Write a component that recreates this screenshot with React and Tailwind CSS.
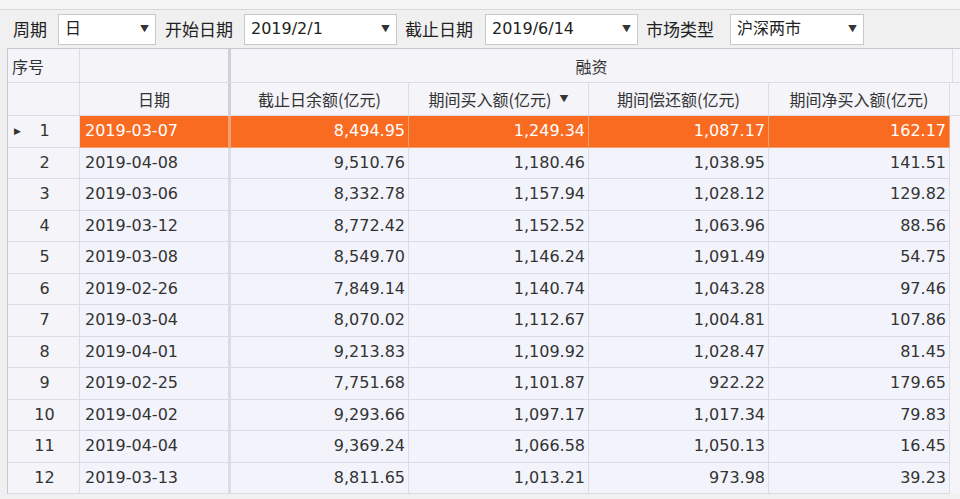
const rows = [
["2019-03-07","8,494.95","1,249.34","1,087.17","162.17"],
["2019-04-08","9,510.76","1,180.46","1,038.95","141.51"],
["2019-03-06","8,332.78","1,157.94","1,028.12","129.82"],
["2019-03-12","8,772.42","1,152.52","1,063.96","88.56"],
["2019-03-08","8,549.70","1,146.24","1,091.49","54.75"],
["2019-02-26","7,849.14","1,140.74","1,043.28","97.46"],
["2019-03-04","8,070.02","1,112.67","1,004.81","107.86"],
["2019-04-01","9,213.83","1,109.92","1,028.47","81.45"],
["2019-02-25","7,751.68","1,101.87","922.22","179.65"],
["2019-04-02","9,293.66","1,097.17","1,017.34","79.83"],
["2019-04-04","9,369.24","1,066.58","1,050.13","16.45"],
["2019-03-13","8,811.65","1,013.21","973.98","39.23"],
];
const F = { fontFamily: '"Noto Sans CJK SC", "Noto Sans", sans-serif' };
const N = { fontFamily: 'Tahoma, "DejaVu Sans", "Noto Sans CJK SC", sans-serif' };
const Caret = () => <span className="text-[9px] text-[#333]">▼</span>;
const Combo = ({ w, v }) => (
  <div className={`h-[31px] ${w} bg-white border border-[#c8c8c8] flex items-center justify-between px-1.5 text-[16px] text-[#222]`}>
    <span style={N}>{v}</span><Caret />
  </div>
);
export default function App() {
  return (
    <div className="w-[960px] h-[499px] overflow-hidden bg-[#f0f0f0] relative" style={F}>
      <div className="h-[10px] border-b border-[#d8d8d8] bg-[#f5f5f5]" />
      <div className="h-[38px] flex items-center pl-[13px] text-[17px] text-[#222]">
        <span className="w-[45px]">周期</span><Combo w="w-[98px]" v="日" />
        <span className="ml-[9px] w-[79px]">开始日期</span><Combo w="w-[153px]" v="2019/2/1" />
        <span className="ml-[8px] w-[80px]">截止日期</span><Combo w="w-[153px]" v="2019/6/14" />
        <span className="ml-[8px] w-[84px]">市场类型</span><Combo w="w-[134px]" v="沪深两市" />
      </div>
      <div className="ml-[7px] border-l border-t border-[#c8c8d0] bg-[#f4f4f9] text-[16px] text-[#333]">
        <div className="flex h-[34px] border-b border-[#dcdce4]">
          <div className="w-[72px] border-r border-[#dcdce4] pl-[4px] flex items-center">序号</div>
          <div className="w-[151px] border-r-[3px] border-[#d0d0d8]" />
          <div className="w-[722px] border-r border-[#dcdce4] flex items-center justify-center">融资</div>
        </div>
        <div className="flex h-[33px] border-b border-[#dcdce4]">
          <div className="w-[72px] border-r border-[#dcdce4]" />
          <div className="w-[151px] border-r-[3px] border-[#d0d0d8] flex items-center justify-center">日期</div>
          <div className="w-[178px] border-r border-[#dcdce4] flex items-center justify-center">截止日余额(亿元)</div>
          <div className="w-[180px] border-r border-[#dcdce4] flex items-center justify-center gap-2">期间买入额(亿元)<Caret /></div>
          <div className="w-[180px] border-r border-[#dcdce4] flex items-center justify-center">期间偿还额(亿元)</div>
          <div className="w-[181px] border-r border-[#dcdce4] flex items-center justify-center">期间净买入额(亿元)</div>
        </div>
        {rows.map((r, i) => {
          const sel = i === 0;
          const c = sel ? "bg-[#fa6b22] text-white border-[#f2a070]" : "bg-[#f3f4fb] text-[#333] border-[#dcdce4]";
          return (
            <div key={i} className="flex h-[31.5px] text-[16px]" style={N}>
              <div className="w-[72px] border-r border-b border-[#dcdce4] flex items-center relative justify-center">
                {sel && <span className="absolute left-[6px] text-[9px]">▶</span>}
                <span className="pl-[2px]">{i + 1}</span>
              </div>
              <div className={`w-[151px] border-r-[3px] border-b ${c} flex items-center pl-[5px]`}>{r[0]}</div>
              {[178, 180, 180, 181].map((w, j) => (
                <div key={j} style={{ width: w }} className={`border-r border-b ${c} flex items-center justify-end pr-[3px]`}>{r[j + 1]}</div>
              ))}
            </div>
          );
        })}
      </div>
    </div>
  );
}
